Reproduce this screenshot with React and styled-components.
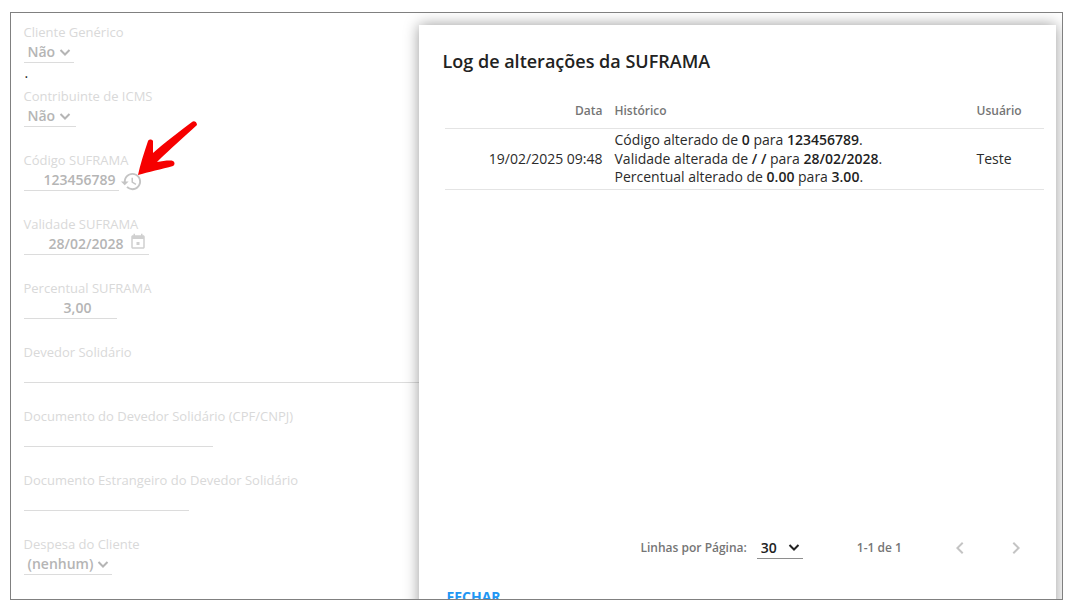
import styled, { createGlobalStyle } from "styled-components"

/* --------------------------------- STYLES --------------------------------- */

const Global = createGlobalStyle`
	html, body {
		margin: 0;
		padding: 0;
		background: #fff;
		font-family: "Open Sans", "Liberation Sans", sans-serif;
	}
`

const Page = styled.div`
	width: 1067px;
	height: 613px;
	padding: 12px 0 0 10px;
	box-sizing: border-box;
	overflow: hidden;
`

const Frame = styled.div`
	position: relative;
	width: 1053px;
	height: 588px;
	box-sizing: border-box;
	border: 1.5px solid #808080;
	overflow: hidden;
`

const Form = styled.div`
	display: flex;
	flex-direction: column;
	padding: 10px 0 0 12.5px;
`

const Field = styled.div`
	height: 64px;
`

const Label = styled.div`
	font-size: 13px;
	line-height: 18px;
	color: #d9d9d9;
`

const Control = styled.div`
	display: flex;
	align-items: center;
	box-sizing: border-box;
	width: ${({ $width }) => $width}px;
	height: 22px;
	padding: 0 ${({ $pad }) => $pad ?? 0}px;
	justify-content: ${({ $end }) => ($end ? "flex-end" : "flex-start")};
	font-size: 14px;
	font-weight: 600;
	color: #b5b5b5;
	border-bottom: 1px solid #dcdcdc;
`

const CenteredControl = styled(Control)`
	justify-content: center;
	padding-left: 15px;
`

const Dot = styled.div`
	height: 0;
	margin: 10px 0 0 1px;
	font-size: 14px;
	line-height: 0;
	color: #222;
`

const Chevron = styled.svg`
	margin-left: 4px;
	flex: none;
`

const FieldRow = styled.div`
	display: flex;
	align-items: flex-start;
`

const HistoryIcon = styled.svg`
	margin: 1px 0 0 1px;
	flex: none;
`

const EventIcon = styled.svg`
	position: relative;
	margin-left: 5px;
	top: -2px;
	flex: none;
`

const RedArrow = styled.svg`
	position: absolute;
	left: 108.5px;
	top: 103.5px;
`

const Modal = styled.div`
	position: absolute;
	left: 407.5px;
	top: 11.5px;
	width: 637px;
	height: 590px;
	display: flex;
	flex-direction: column;
	background: #fff;
	box-shadow: 0 0 14px rgba(0, 0, 0, 0.4);
`

const Title = styled.h2`
	margin: 0;
	padding: 23px 24px 0;
	font-size: 18px;
	line-height: 26px;
	font-weight: 600;
	color: #222;
`

const LogTable = styled.table`
	width: 599px;
	margin: 20px 0 0 26px;
	border-collapse: collapse;
	table-layout: fixed;
`

const HeadCell = styled.th`
	height: 35px;
	padding: 0;
	padding-right: ${({ $right }) => ($right ? "12px" : "0")};
	box-sizing: border-box;
	font-size: 12px;
	font-weight: 600;
	color: #757575;
	text-align: ${({ $right }) => ($right ? "right" : "left")};
	border-bottom: 1px solid #e4e4e4;
`

const Cell = styled.td`
	padding: 2px 0 2px;
	padding-right: ${({ $right }) => ($right ? "12px" : "0")};
	font-size: 14px;
	line-height: 18.6px;
	color: #2b2b2b;
	text-align: ${({ $right }) => ($right ? "right" : "left")};
	border-bottom: 1px solid #e4e4e4;
`

const Strong = styled.b`
	font-weight: 600;
	color: #1f1f1f;
`

const Pagination = styled.div`
	display: flex;
	align-items: center;
	margin-top: auto;
	padding: 0 0 0 222px;
	height: 24px;
`

const PerPageLabel = styled.span`
	font-size: 12px;
	font-weight: 600;
	color: #757575;
`

const PerPage = styled.div`
	display: flex;
	align-items: center;
	justify-content: space-between;
	box-sizing: border-box;
	width: 46px;
	height: 22px;
	margin: 0 54px 0 10px;
	padding: 0 3px 0 4px;
	font-size: 14px;
	font-weight: 600;
	color: #222;
	border-bottom: 1px solid #8e8e8e;
`

const RangeLabel = styled.span`
	width: 91px;
	font-size: 12px;
	font-weight: 600;
	color: #757575;
`

const PageButton = styled.svg`
	margin-right: ${({ $gap }) => $gap ?? 0}px;
	flex: none;
`

const Actions = styled.div`
	height: 55px;
	padding: 25px 0 0 28px;
	box-sizing: border-box;
`

const CloseButton = styled.span`
	font-size: 14px;
	line-height: 20px;
	font-weight: 700;
	color: #2196f3;
`

/* ------------------------------- COMPONENTS ------------------------------- */

function SelectChevron({ size = 12, color = "#b5b5b5" }) {
	return (
		<Chevron width={size} height={size} viewBox="0 0 12 12">
			<path d="M1.5 4l4.5 4.5L10.500 4" fill="none" stroke={color} strokeWidth="2" />
		</Chevron>
	)
}

const FIELDS = [
	{ label: "Devedor Solidário", width: 420 },
	{ label: "Documento do Devedor Solidário (CPF/CNPJ)", width: 189 },
	{ label: "Documento Estrangeiro do Devedor Solidário", width: 165 },
]

function App() {
	return (
		<Page>
			<Global />
			<Frame>
				<Form>
					<Field>
						<Label>Cliente Genérico</Label>
						<Control $width={50} $pad={4}>
							Não
							<SelectChevron />
						</Control>
						<Dot>.</Dot>
					</Field>
					<Field>
						<Label>Contribuinte de ICMS</Label>
						<Control $width={52} $pad={4}>
							Não
							<SelectChevron />
						</Control>
					</Field>
					<Field>
						<Label>Código SUFRAMA</Label>
						<FieldRow>
							<Control $width={95} $pad={3} $end>
								123456789
							</Control>
							<HistoryIcon width="23" height="23" viewBox="0 0 24 24" fill="#c4c4c4">
								<path d="M13 3c-4.97 0-9 4.03-9 9H1l3.89 3.89.07.14L9 12H6c0-3.87 3.13-7 7-7s7 3.13 7 7-3.13 7-7 7c-1.93 0-3.68-.79-4.94-2.06l-1.42 1.42C8.27 19.99 10.51 21 13 21c4.97 0 9-4.03 9-9s-4.03-9-9-9zm-1 5v5l4.28 2.54.72-1.21-3.5-2.08V8H12z" />
							</HistoryIcon>
						</FieldRow>
					</Field>
					<Field>
						<Label>Validade SUFRAMA</Label>
						<Control $width={125} $pad={2} $end>
							28/02/2028
							<EventIcon width="18" height="18" viewBox="0 0 24 24" fill="#d0d0d0">
								<path d="M14 12h-4v4h4v-4zM16 1v2H8V1H6v2H5c-1.11 0-1.99.9-1.99 2L3 19c0 1.1.89 2 2 2h14c1.1 0 2-.9 2-2V5c0-1.1-.9-2-2-2h-1V1h-2zm3 18H5V8h14v11z" />
							</EventIcon>
						</Control>
					</Field>
					<Field>
						<Label>Percentual SUFRAMA</Label>
						<CenteredControl $width={93}>3,00</CenteredControl>
					</Field>
					{FIELDS.map(({ label, width }) => (
						<Field key={label}>
							<Label>{label}</Label>
							<Control $width={width} />
						</Field>
					))}
					<Field>
						<Label>Despesa do Cliente</Label>
						<Control $width={88} $pad={4}>
							(nenhum)
							<SelectChevron />
						</Control>
					</Field>
				</Form>
				<RedArrow width="90" height="80" viewBox="0 0 90 80">
					<path
						d="M72 5 C74 3 77 5 77 8 C66 18 50 32 37 45 C43 44 50 43 53 44 C55 45 55 48 53 49 C42 52 28 55 18 58 C20 48 24 36 28 24 C29 22 32 22 33 24 C33 28 33 32 33 36 C44 26 60 14 72 5Z"
						fill="#f60000"
					/>
				</RedArrow>
				<Modal>
					<Title>Log de alterações da SUFRAMA</Title>
					<LogTable>
						<colgroup>
							<col width="170" />
							<col width="362" />
							<col width="67" />
						</colgroup>
						<thead>
							<tr>
								<HeadCell $right>Data</HeadCell>
								<HeadCell>Histórico</HeadCell>
								<HeadCell>Usuário</HeadCell>
							</tr>
						</thead>
						<tbody>
							<tr>
								<Cell $right>19/02/2025 09:48</Cell>
								<Cell>
									Código alterado de <Strong>0</Strong> para <Strong>123456789</Strong>.<br />
									Validade alterada de <Strong>/ /</Strong> para <Strong>28/02/2028</Strong>.<br />
									Percentual alterado de <Strong>0.00</Strong> para <Strong>3.00</Strong>.
								</Cell>
								<Cell>Teste</Cell>
							</tr>
						</tbody>
					</LogTable>
					<Pagination>
						<PerPageLabel>Linhas por Página:</PerPageLabel>
						<PerPage>
							30
							<SelectChevron color="#222" />
						</PerPage>
						<RangeLabel>1-1 de 1</RangeLabel>
						<PageButton $gap={32} width="24" height="24" viewBox="0 0 24 24" fill="#c4c4c4">
							<path d="M15.41 7.41L14 6l-6 6 6 6 1.41-1.41L10.83 12z" />
						</PageButton>
						<PageButton width="24" height="24" viewBox="0 0 24 24" fill="#c4c4c4">
							<path d="M10 6L8.59 7.41 13.17 12l-4.58 4.59L10 18l6-6z" />
						</PageButton>
					</Pagination>
					<Actions>
						<CloseButton>FECHAR</CloseButton>
					</Actions>
				</Modal>
			</Frame>
		</Page>
	)
}

export default App
